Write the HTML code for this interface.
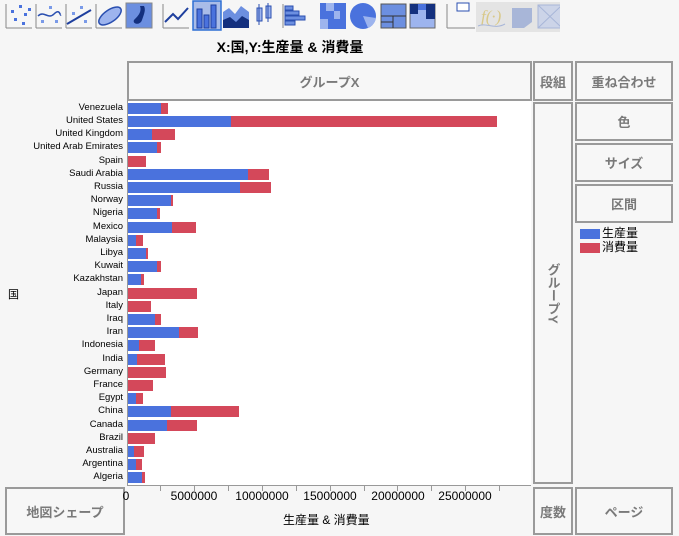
<!DOCTYPE html>
<html><head><meta charset="utf-8">
<style>
*{margin:0;padding:0;box-sizing:border-box}
body{width:679px;height:536px;background:#f6f6f6;position:relative;overflow:hidden;font-family:"Liberation Sans","Noto Sans CJK JP",sans-serif}
.a{position:absolute}
.btn{position:absolute;border:2px solid #9a9a9a;background:#f7f7f7;color:#7a7a7a;font-weight:bold;font-size:13px;display:flex;align-items:center;justify-content:center}
.ic{position:absolute;top:3px;width:27px;height:27px}
.lbl{position:absolute;right:556px;font-size:9.5px;color:#000;white-space:nowrap;line-height:12px}
.b{position:absolute;height:11px;background:#4a72dd}
.r{position:absolute;height:11px;background:#d4485a}
.tk{position:absolute;top:486px;width:1px;height:5px;background:#999}
.tl{position:absolute;top:489px;font-size:12px;color:#000;transform:translateX(-50%)}
</style></head><body>
<!-- toolbar -->
<svg class="a" style="left:0;top:0" width="560" height="32">
<g fill="#f4f4f4" stroke="#888">
</g>
<g>
<path d="M6 28H32M6 28V4" stroke="#888" fill="none"/>
<g fill="#4a72dd"><rect x="11" y="10" width="3" height="3"/><rect x="19" y="5" width="3" height="3"/><rect x="24" y="13" width="3" height="3"/><rect x="14" y="18" width="3" height="3"/><rect x="22" y="22" width="3" height="3"/><rect x="28" y="8" width="3" height="3"/></g>
<path d="M36 28H62M36 28V4" stroke="#888" fill="none"/>
<path d="M38 16C44 10 48 20 54 14S60 16 61 15" stroke="#2a4fb0" fill="none" stroke-width="1.5"/>
<g fill="#7a9ae8"><rect x="41" y="20" width="3" height="3"/><rect x="49" y="6" width="3" height="3"/><rect x="55" y="20" width="3" height="3"/></g>
<path d="M66 28H92M66 28V4" stroke="#888" fill="none"/>
<path d="M67 24L91 10" stroke="#1e3f9e" stroke-width="2"/>
<g fill="#7a9ae8"><rect x="72" y="12" width="3" height="3"/><rect x="80" y="6" width="3" height="3"/><rect x="84" y="20" width="3" height="3"/></g>
<path d="M96 28H122M96 28V4" stroke="#888" fill="none"/>
<ellipse cx="110" cy="16" rx="13" ry="6" transform="rotate(-35 110 16)" fill="#9db4ee" stroke="#2a4fb0" stroke-width="1.5"/>
<rect x="126" y="3" width="26" height="25" fill="#6c8fe0" stroke="#888"/>
<path d="M140 6C142 12 138 16 134 20C132 24 140 26 142 20C144 14 146 10 144 6Z" fill="#14307e"/>
<path d="M163 28H189M163 28V4" stroke="#888" fill="none"/>
<path d="M165 22L173 14L178 19L188 8" stroke="#1e3f9e" stroke-width="2" fill="none"/>
<rect x="193" y="1" width="28" height="29" fill="#a9bce8" stroke="#2d6fd4" stroke-width="1.5"/>
<g fill="#4a72dd" stroke="#1e3f9e"><rect x="197" y="9" width="5" height="19"/><rect x="204" y="15" width="5" height="13"/><rect x="211" y="5" width="5" height="23"/></g>
<path d="M223 28V12L229 8L235 14L241 6L249 12V28Z" fill="#6c8fe0"/><path d="M223 28V20L230 17L236 22L242 16L249 20V28Z" fill="#14307e"/>
<g stroke="#2a4fb0" fill="#9db4ee"><rect x="257" y="8" width="5" height="13"/><rect x="266" y="6" width="5" height="12"/><path d="M259 4V25M268 3V22" fill="none"/></g>
<path d="M283 28V4" stroke="#888"/>
<g fill="#6c8fe0" stroke="#2a4fb0"><rect x="285" y="6" width="8" height="4"/><rect x="285" y="11" width="14" height="4"/><rect x="285" y="16" width="20" height="4"/><rect x="285" y="21" width="10" height="4"/></g>
<g><rect x="320" y="3" width="26" height="26" fill="#4a72dd"/><rect x="326" y="3" width="8" height="8" fill="#9db4ee"/><rect x="334" y="11" width="6" height="8" fill="#9db4ee"/><rect x="320" y="19" width="8" height="10" fill="#9db4ee"/></g>
<circle cx="363" cy="16" r="13" fill="#4a72dd"/><path d="M363 16L376 18A13 13 0 0 1 368 28Z" fill="#9db4ee"/>
<g><rect x="381" y="4" width="25" height="24" fill="#6c8fe0" stroke="#555"/><path d="M381 16H406M393 16V28M381 22H393" stroke="#333"/></g>
<g><rect x="410" y="4" width="25" height="24" fill="#9db4ee" stroke="#666"/><rect x="410" y="4" width="8" height="10" fill="#14307e"/><rect x="418" y="4" width="8" height="6" fill="#4a72dd"/><rect x="426" y="4" width="9" height="15" fill="#14307e"/></g>
<path d="M447 28H475M447 28V4" stroke="#888" fill="none"/>
<rect x="457" y="3" width="12" height="8" fill="#fff" stroke="#2a4fb0"/>
<rect x="476" y="2" width="88" height="30" fill="#e4e4e4"/>
<text x="481" y="22" font-family="Liberation Serif" font-style="italic" font-size="17" fill="#d9c98a">f(·)</text>
<path d="M478 26C486 22 494 30 505 24" stroke="#a8b6d8" fill="none"/>
<path d="M512 8H532V22L524 28H512Z" fill="#a8b6d8"/>
<rect x="538" y="5" width="24" height="23" fill="#ccd4e8" stroke="#a8b6d8"/><path d="M538 5L562 28M562 5L538 28" stroke="#a8b6d8"/>
</g></svg>
<div class="a" style="left:0;width:580px;top:37px;text-align:center;font-weight:bold;font-size:14px">X:国,Y:生産量 &amp; 消費量</div>

<div class="btn" style="left:127px;top:61px;width:405px;height:40px">グループX</div>
<div class="btn" style="left:533px;top:61px;width:40px;height:40px">段組</div>
<div class="btn" style="left:575px;top:61px;width:98px;height:40px">重ね合わせ</div>
<div class="btn" style="left:575px;top:102px;width:98px;height:39px">色</div>
<div class="btn" style="left:575px;top:143px;width:98px;height:39px">サイズ</div>
<div class="btn" style="left:575px;top:184px;width:98px;height:39px">区間</div>
<div class="btn" style="left:533px;top:102px;width:40px;height:382px"><span style="writing-mode:vertical-rl">グループY</span></div>
<div class="btn" style="left:5px;top:487px;width:120px;height:48px">地図シェープ</div>
<div class="btn" style="left:533px;top:487px;width:40px;height:48px">度数</div>
<div class="btn" style="left:575px;top:487px;width:98px;height:48px">ページ</div>

<div class="a" style="left:580px;top:229px;width:20px;height:10px;background:#4a72dd"></div>
<div class="a" style="left:580px;top:243px;width:20px;height:10px;background:#d4485a"></div>
<div class="a" style="left:602px;top:226px;font-size:12px;line-height:14px">生産量<br>消費量</div>

<div class="a" style="left:127px;top:101px;width:404px;height:385px;background:#fff;border-left:1px solid #999;border-bottom:1px solid #999"></div>
<div class="a" style="left:8px;top:286px;font-size:11px">国</div>

<div class="lbl" style="top:102px">Venezuela</div><div class="b" style="left:128px;top:103px;width:33px"></div><div class="r" style="left:161px;top:103px;width:7px"></div>
<div class="lbl" style="top:115px">United States</div><div class="b" style="left:128px;top:116px;width:103px"></div><div class="r" style="left:231px;top:116px;width:266px"></div>
<div class="lbl" style="top:128px">United Kingdom</div><div class="b" style="left:128px;top:129px;width:24px"></div><div class="r" style="left:152px;top:129px;width:23px"></div>
<div class="lbl" style="top:141px">United Arab Emirates</div><div class="b" style="left:128px;top:142px;width:29px"></div><div class="r" style="left:157px;top:142px;width:4px"></div>
<div class="lbl" style="top:155px">Spain</div><div class="r" style="left:128px;top:156px;width:18px"></div>
<div class="lbl" style="top:168px">Saudi Arabia</div><div class="b" style="left:128px;top:169px;width:120px"></div><div class="r" style="left:248px;top:169px;width:21px"></div>
<div class="lbl" style="top:181px">Russia</div><div class="b" style="left:128px;top:182px;width:112px"></div><div class="r" style="left:240px;top:182px;width:31px"></div>
<div class="lbl" style="top:194px">Norway</div><div class="b" style="left:128px;top:195px;width:43px"></div><div class="r" style="left:171px;top:195px;width:2px"></div>
<div class="lbl" style="top:207px">Nigeria</div><div class="b" style="left:128px;top:208px;width:29px"></div><div class="r" style="left:157px;top:208px;width:3px"></div>
<div class="lbl" style="top:221px">Mexico</div><div class="b" style="left:128px;top:222px;width:44px"></div><div class="r" style="left:172px;top:222px;width:24px"></div>
<div class="lbl" style="top:234px">Malaysia</div><div class="b" style="left:128px;top:235px;width:8px"></div><div class="r" style="left:136px;top:235px;width:7px"></div>
<div class="lbl" style="top:247px">Libya</div><div class="b" style="left:128px;top:248px;width:18px"></div><div class="r" style="left:146px;top:248px;width:2px"></div>
<div class="lbl" style="top:260px">Kuwait</div><div class="b" style="left:128px;top:261px;width:29px"></div><div class="r" style="left:157px;top:261px;width:4px"></div>
<div class="lbl" style="top:273px">Kazakhstan</div><div class="b" style="left:128px;top:274px;width:13px"></div><div class="r" style="left:141px;top:274px;width:3px"></div>
<div class="lbl" style="top:287px">Japan</div><div class="r" style="left:128px;top:288px;width:69px"></div>
<div class="lbl" style="top:300px">Italy</div><div class="r" style="left:128px;top:301px;width:23px"></div>
<div class="lbl" style="top:313px">Iraq</div><div class="b" style="left:128px;top:314px;width:27px"></div><div class="r" style="left:155px;top:314px;width:6px"></div>
<div class="lbl" style="top:326px">Iran</div><div class="b" style="left:128px;top:327px;width:51px"></div><div class="r" style="left:179px;top:327px;width:19px"></div>
<div class="lbl" style="top:339px">Indonesia</div><div class="b" style="left:128px;top:340px;width:11px"></div><div class="r" style="left:139px;top:340px;width:16px"></div>
<div class="lbl" style="top:353px">India</div><div class="b" style="left:128px;top:354px;width:9px"></div><div class="r" style="left:137px;top:354px;width:28px"></div>
<div class="lbl" style="top:366px">Germany</div><div class="r" style="left:128px;top:367px;width:38px"></div>
<div class="lbl" style="top:379px">France</div><div class="r" style="left:128px;top:380px;width:25px"></div>
<div class="lbl" style="top:392px">Egypt</div><div class="b" style="left:128px;top:393px;width:8px"></div><div class="r" style="left:136px;top:393px;width:7px"></div>
<div class="lbl" style="top:405px">China</div><div class="b" style="left:128px;top:406px;width:43px"></div><div class="r" style="left:171px;top:406px;width:68px"></div>
<div class="lbl" style="top:419px">Canada</div><div class="b" style="left:128px;top:420px;width:39px"></div><div class="r" style="left:167px;top:420px;width:30px"></div>
<div class="lbl" style="top:432px">Brazil</div><div class="r" style="left:128px;top:433px;width:27px"></div>
<div class="lbl" style="top:445px">Australia</div><div class="b" style="left:128px;top:446px;width:6px"></div><div class="r" style="left:134px;top:446px;width:10px"></div>
<div class="lbl" style="top:458px">Argentina</div><div class="b" style="left:128px;top:459px;width:8px"></div><div class="r" style="left:136px;top:459px;width:6px"></div>
<div class="lbl" style="top:471px">Algeria</div><div class="b" style="left:128px;top:472px;width:14px"></div><div class="r" style="left:142px;top:472px;width:3px"></div>

<div class="tk" style="left:160px"></div><div class="tk" style="left:194px"></div><div class="tk" style="left:228px"></div><div class="tk" style="left:262px"></div><div class="tk" style="left:296px"></div><div class="tk" style="left:330px"></div><div class="tk" style="left:364px"></div><div class="tk" style="left:397px"></div><div class="tk" style="left:431px"></div><div class="tk" style="left:465px"></div><div class="tk" style="left:499px"></div>
<div class="tl" style="left:126px">0</div><div class="tl" style="left:194px">5000000</div><div class="tl" style="left:262px">10000000</div><div class="tl" style="left:330px">15000000</div><div class="tl" style="left:398px">20000000</div><div class="tl" style="left:465px">25000000</div>
<div class="a" style="left:283px;top:511px;font-size:12px">生産量 &amp; 消費量</div>
</body></html>
